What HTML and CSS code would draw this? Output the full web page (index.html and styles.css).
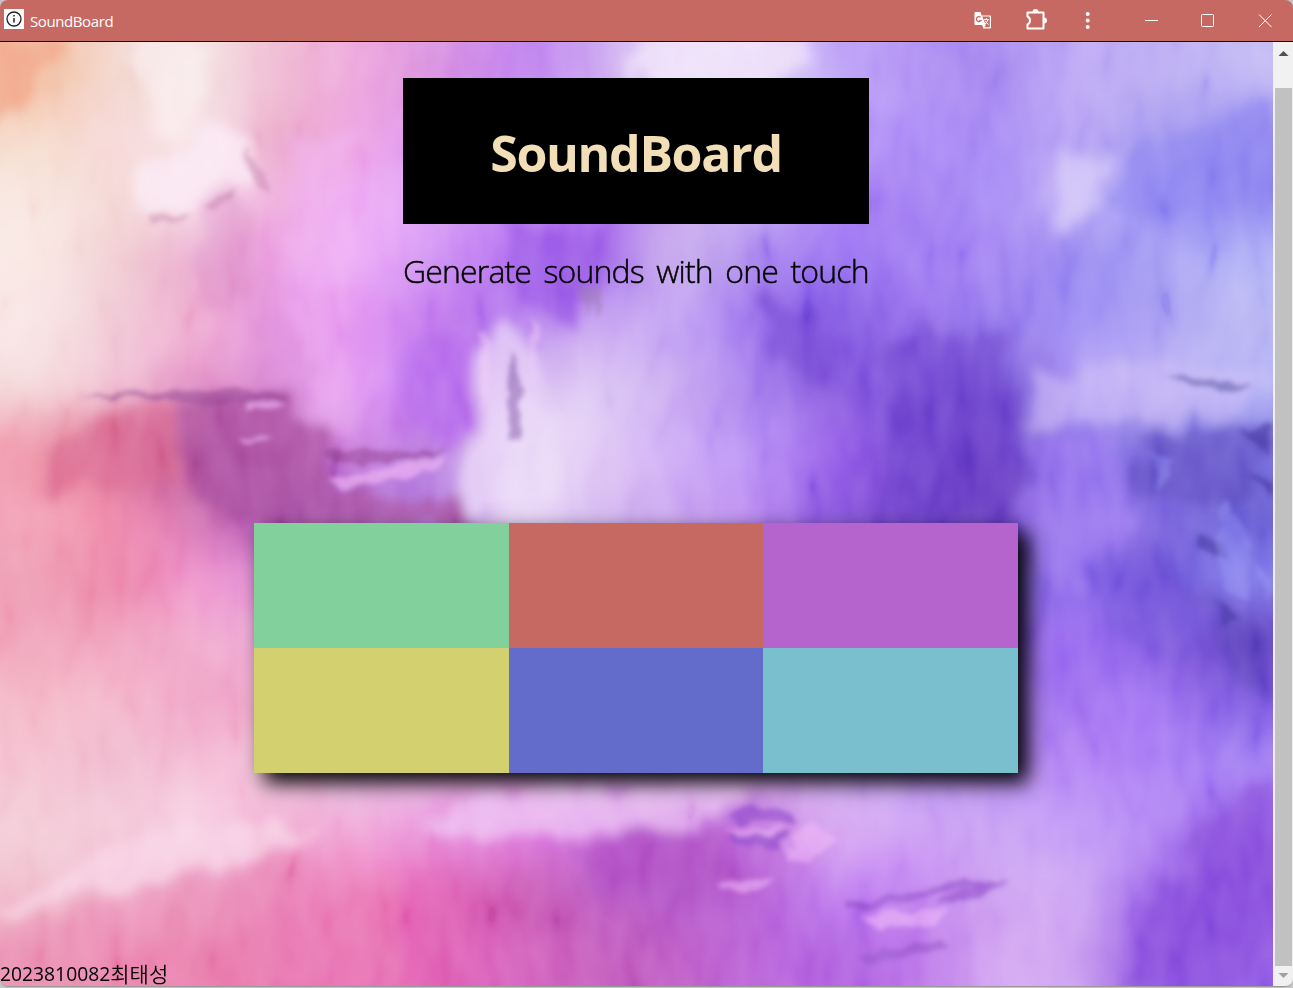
FILE: index.html
```html
<!DOCTYPE html>
<html lang="ko">
<head>
<meta charset="utf-8">
<title>SoundBoard</title>
<link rel="stylesheet" href="styles.css">
</head>
<body>
<div class="window">
  <header class="titlebar">
    <svg class="app-icon" viewBox="0 0 20 20"><path fill="#fff" d="M0 0h20v20H0z"/><circle cx="10" cy="10" r="7" fill="none" stroke="#222" stroke-width="1.3"/><path d="M10 9v4.500M10 6v1.500" stroke="#222" stroke-width="1.500"/></svg>
    <span class="app-name">SoundBoard</span>
    <svg class="tools" viewBox="0 0 343 41" fill="none" stroke="#fff">
      <path fill="#fff" stroke="none" d="M25.500 12h5l1.200 3.500H40q1 0 1 1V27.500q0 1-1 1H33.500L32 25h-6.500q-1 0-1-1V13q0-1 1-1z"/>
      <path fill="#c66962" stroke="none" d="M32.300 16.500H39.800v10.800H34.300l1.500-2z"/>
      <path stroke="#c66962" stroke-width="1.200" d="M30.600 17.200a2.500 2.500 0 1 0 .4 3.300h-2"/>
      <path stroke="#fff" stroke-width="1" d="M33.800 19.500h5M36.300 18v1.500M38 19.500q-.7 3.200-3.500 5M35 20.500q1 2.500 3.700 4"/>
      <path stroke-width="2" stroke-linejoin="round" d="M77.500 12.500h16V28.500h-16V24.500q2.500-1.200 2.500-4t-2.500-4z"/>
      <path fill="#fff" stroke="none" d="M82.500 12a3 3 0 0 1 6 0zM94 17.500a3 3 0 0 1 0 6z"/>
      <g fill="#fff" stroke="none"><circle cx="137.700" cy="14" r="2"/><circle cx="137.700" cy="20.500" r="2"/><circle cx="137.700" cy="27" r="2"/></g>
      <path d="M195 20.500h13"/><rect x="251.500" y="14.500" width="12" height="12" rx="1"/><path d="M309 14.500l12.500 12.500M321.500 14.500L309 27"/>
    </svg>
  </header>
  <div class="viewport">
    <main class="page">
      <div class="backdrop">
        <canvas id="wash" class="wash" width="1273" height="944"></canvas>
        <svg class="strokes" viewBox="0 42 1273 944">
          <defs>
            <filter id="soft" filterUnits="userSpaceOnUse" x="-40" y="0" width="1360" height="1040"><feTurbulence type="fractalNoise" baseFrequency=".03 .02" numOctaves="3" seed="3" result="n"/><feDisplacementMap in="SourceGraphic" in2="n" scale="45" xChannelSelector="R" yChannelSelector="G"/><feGaussianBlur stdDeviation="6"/></filter>
            <filter id="fine" filterUnits="userSpaceOnUse" x="-40" y="0" width="1360" height="1040"><feTurbulence type="fractalNoise" baseFrequency=".05" numOctaves="2" seed="5" result="n"/><feDisplacementMap in="SourceGraphic" in2="n" scale="14" xChannelSelector="R" yChannelSelector="G"/><feGaussianBlur stdDeviation="2.800"/></filter>
            <filter id="grain" x="0" y="0" width="100%" height="100%"><feTurbulence type="fractalNoise" baseFrequency=".04 .018" numOctaves="2" seed="8"/><feColorMatrix values="1.400 0 0 0 -.2  1.400 0 0 0 -.2  1.400 0 0 0 -.2  0 0 0 0 1"/></filter>
          </defs>
          <g filter="url(#soft)">
            <path fill="#f1a284" opacity=".75" d="M-10 40H70L48 75 25 108-10 120z"/>
            <path fill="#fae9f3" opacity=".85" d="M132 208L145 175 190 150 238 122 255 175 222 190 190 212z"/>
            <path fill="#fbeef1" opacity=".6" d="M130 40H215L190 145 170 145 155 85z"/>
            <path fill="#d98ac4" opacity=".4" d="M200 205L240 192 250 300 195 305z"/>
            <path fill="#f3b4f8" opacity=".4" d="M290 130H350L350 440 325 440 290 300z"/>
            <path fill="#9957e6" opacity=".7" d="M500 224H612L600 285 565 320 530 310z"/>
            <path fill="#efe0fa" opacity=".8" d="M640 40H810L785 78H630z"/>
            <path fill="#ead7f8" opacity=".7" d="M485 345L515 325 545 370 560 510H460L462 460 480 410z"/>
            <path fill="#b86aec" opacity=".8" d="M405 335H475L478 380 452 450 405 400z"/>
            <path fill="#7445d2" opacity=".65" d="M755 290L830 315 835 380 770 365z"/>
            <path fill="#6a3fca" opacity=".55" d="M880 350L940 330 1005 345 1018 400 1012 530H870L885 430z"/>
            <path fill="#9b78f0" opacity=".7" d="M1025 440L1120 435 1130 540 1060 600 1022 530z"/>
            <path fill="#d2c6f8" opacity=".8" d="M1053 150L1108 155 1100 205 1058 242z"/>
            <path fill="#8b82ef" opacity=".65" d="M1125 155L1190 135 1273 95V200L1190 210 1110 210z"/>
            <path fill="#d8668f" opacity=".65" d="M45 445L95 415 200 400V485L130 480 50 495z"/>
            <path fill="#a84e9e" opacity=".75" d="M185 400L290 398 325 445 330 485 385 500 460 500 470 530H260L192 500z"/>
            <path fill="#cbbcf7" opacity=".6" d="M1030 375L1100 370 1170 360 1273 375 1235 420 1130 418 1060 430 1030 425z"/>
            <path fill="#5541b8" opacity=".5" d="M1140 430L1200 428 1273 420V450L1230 510 1130 490zM1190 590L1250 625 1273 640V700L1230 675z"/>
            <path fill="#7656dc" opacity=".5" d="M1070 560L1140 540 1200 600 1190 660 1120 630z"/>
            <path fill="#f8d5e6" opacity=".8" d="M0 915L50 885 100 850 190 825 290 825 340 822 285 850 200 862 150 885 60 895 0 930z"/>
            <path fill="#e987b5" opacity=".4" d="M0 935L110 895 210 868 300 855 400 880V990H0z"/>
            <path fill="#f0c9f5" opacity=".7" d="M500 785H770L680 822 580 828 430 835 430 815z"/>
            <path fill="#b052c4" opacity=".7" d="M580 850L640 825 720 828 745 880 700 900 590 900z"/>
            <path fill="#874cdb" opacity=".75" d="M1273 780L1200 830 1185 870 1150 910 1130 985H1273z"/>
          </g>
          <g filter="url(#fine)">
            <path fill="#8d3d8b" opacity=".55" d="M75 396Q150 386 288 392L285 403 240 402 192 405 145 398zM325 452L450 449 425 458 360 463 325 460z"/>
            <path fill="#edaef3" opacity=".7" d="M244 401L285 404 275 409 245 408zM240 437L275 436 265 441 240 441zM325 480L360 472 440 456 448 463 410 477 345 489z"/>
            <path fill="#9b74bc" opacity=".75" d="M509 350L520 370 520 440 510 444 507 400zM580 290L588 318 592 300 598 318 604 285z"/>
            <path fill="#b56a9c" opacity=".4" d="M245 150L260 165 270 195 255 185zM205 203L235 188 230 200 210 208zM150 214L190 217 185 222 150 220z"/>
            <path fill="#7069b5" opacity=".75" d="M1165 375L1205 380 1250 385 1240 391 1200 386z"/>
            <path fill="#3e329e" opacity=".65" d="M1240 430L1273 425V458L1255 443zM1250 475L1273 480V500zM1195 530L1225 545 1230 560 1200 550zM1215 600L1240 620 1225 625z"/>
            <path fill="#9290f4" opacity=".5" d="M1225 500L1245 530 1250 600 1225 590 1215 540zM1150 450L1175 460 1160 490zM1255 560L1273 575 1265 600z"/>
            <path fill="#9855d0" opacity=".8" d="M845 905L900 895 960 880 1008 882 980 898 930 903 970 887 900 903 850 912zM855 955L940 940 950 947 870 965z"/>
            <path fill="#8f48cb" opacity=".65" d="M725 818L750 806 790 810 795 823 760 820 740 826zM730 835L785 830 795 850 735 845z"/>
            <path fill="#efb4f8" opacity=".6" d="M722 830L785 827 780 832 740 836zM720 884L775 878 758 889 722 890zM780 840L815 825 840 840 820 856 790 865zM860 915L920 910 950 908 935 925 880 930z"/>
            <path fill="#f1c5fa" opacity=".5" d="M480 330Q495 330 490 390L482 415zM530 315L540 340 530 370z"/>
          </g>
          <rect class="grain" y="42" width="1273" height="944" filter="url(#grain)"/>
        </svg>
      </div>
      <section class="intro">
        <h1>SoundBoard</h1>
        <p>Generate sounds with one touch</p>
      </section>
      <section class="board">
        <div class="pad green"></div><div class="pad red"></div><div class="pad violet"></div>
        <div class="pad yellow"></div><div class="pad blue"></div><div class="pad cyan"></div>
      </section>
      <footer><span class="num">2023810082</span><span class="name">최태성</span></footer>
    </main>
    <aside class="scrollbar">
      <svg viewBox="0 0 20 46"><path d="M5.500 14h10L10.500 9z" fill="#505050"/></svg>
      <div class="thumb"></div>
      <svg class="down" viewBox="0 0 20 20"><path d="M5.500 7h10L10.500 12z" fill="#a0a0a0"/></svg>
    </aside>
  </div>
</div>
<script src="wash.js"></script>
</body>
</html>
```
FILE: styles.css
```css
* { box-sizing: border-box; }
body { margin: 0; height: 988px; overflow: hidden; background: #c4c4c4; font-family: "Open Sans", "Noto Sans CJK KR", sans-serif; }
.window { height: 987px; display: flex; flex-direction: column; border-radius: 8px; overflow: hidden; border-bottom: 1px solid #999; }
.titlebar { height: 42px; flex: none; display: flex; align-items: flex-start; background: #c66962; border-bottom: 1px solid #000; color: #fff; }
.app-icon { width: 20px; height: 20px; margin: 9px 6px 0 4px; }
.app-name { font-size: 15px; line-height: 20px; margin-top: 11px; letter-spacing: -.4px; }
.tools { width: 343px; height: 41px; margin-left: auto; }
.viewport { flex: 1; display: flex; min-height: 0; }
.page { position: relative; width: 1273px; display: flex; flex-direction: column; align-items: center; padding: 36px 1px 0 0; }
.backdrop { position: absolute; inset: 0; overflow: hidden; }
.wash, .strokes { position: absolute; top: 0; left: 0; width: 1273px; height: 944px; display: block; }
.grain { mix-blend-mode: soft-light; opacity: .3; }
.intro, .board, footer { position: relative; }
.intro { width: 466px; text-align: center; }
h1 { margin: 0; height: 146px; line-height: 150px; background: #000; color: #f2dfb8; font-size: 50px; font-weight: 700; letter-spacing: -1.350px; white-space: nowrap; }
.intro p { margin: 25px 0 0; height: 48px; line-height: 44px; font-size: 32px; font-weight: 300; letter-spacing: -.850px; word-spacing: 5px; color: #000; -webkit-text-stroke: .45px #000; text-align: left; white-space: nowrap; }
.board { width: 764px; height: 250px; margin-top: 226px; display: grid; grid-template-columns: 255px 254px 255px; grid-template-rows: 125px 125px; box-shadow: 10px 10px 20px #000; }
.green { background: #82d19c; }
.red { background: #c66962; }
.violet { background: #b464cc; }
.yellow { background: #d3d070; }
.blue { background: #636bcb; }
.cyan { background: #79bfce; }
footer { margin-top: auto; align-self: flex-start; height: 26px; line-height: 28px; display: flex; font-size: 19.300px; color: #000; }
.name { font-family: "Noto Sans CJK KR", sans-serif; font-weight: 350; font-size: 21px; line-height: 26px; }
.scrollbar { width: 20px; background: #f1f1f1; display: flex; flex-direction: column; }
.scrollbar svg { width: 20px; height: 46px; flex: none; }
.scrollbar .down { height: 20px; }
.thumb { flex: 1; margin: 0 1px 0 2px; background: #c1c1c1; }
```
FILE: wash.js
```js
// Watercolour wash: coarse colour samples, smoothly enlarged.
const rows = [
  "f3bea0 f3d8d0 f3e3e3 efb8d0 eda6dc d890e0 c080ee c8a0f0 eae0f8 e8dcf8 bca0f6 b090f4 a384ee bca8f6 b8a8f2 c0b6f4",
  "f5d8c8 f6d6d6 f8e4e8 ecaccb ec9fe0 d890f0 c080f0 d0b0f0 e0d0f8 d0c0f8 b898f6 ac8cf6 a688f4 b8a4f4 a89cf0 9084f0",
  "f8e6e0 f4d6d4 f8dcea eea8da eeaaf4 dca0f6 c080f0 b070ee c8a8f0 c8b0f4 a880f4 a07cf2 a488f4 c0b0f6 948af4 8c84f0",
  "f9e6e2 f0ccd2 eaa6cc e898e0 eca8f6 cc8cf2 b06cf0 9c60ea c8acec a884ee 946cf0 a07cf2 a484f2 9484f0 a49cf2 b0b0f6",
  "f8e4e4 f0c6d4 f0aed2 e08cdc e090f0 be74ec b47cec c8a4f0 c0a0f4 9a70ec 8058e0 9068ea 9074ea a090f4 a89cf2 b8b4f2",
  "f4d6d8 f0bcd0 e08cc4 d888d4 e49cf4 b86aec d8b8f0 dcc8f4 c8a8f0 a47cec 8454dc 7c54dc 6c48d0 a890f2 b8aaf2 b0aef4",
  "ee94a8 d86890 b4589c b860b4 cc80e0 b87ce0 eedcf8 e0c8f4 ccaaf6 b68cf4 9860ea 7444d0 6238c0 8c74ea 7868dc 7870e0",
  "f2a0b4 ee84a8 d070b0 a858b8 b070d0 b07ce0 ecdaf8 d4b8f0 c8a0f0 b888f0 8450dc 7440cc 6034b4 9070ee 7c64e0 6c60d4",
  "ee9cb4 ec84a8 ee90cc d880d0 c890e0 d0a0e8 e0c0f0 d0b0f0 c0a0f0 b080f0 9060e0 8050d8 7050d0 9070ee 6c50d4 7c74e8",
  "f0a0b8 f0a0bc f0a8cc eeaad8 e8a8e0 e0a8e8 e0b8f0 d8b0f0 c8a0f0 b890f0 a880f0 9868e8 8c60e8 9868f0 8058e0 6848c8",
  "f4b8c8 f4b8cc efa0c4 f0acd0 eab0d8 e8b4e0 e8b8ec e0b8f0 d8b0f0 c8a0f0 b890f0 b084f0 a070ec a070f0 a070f2 7c58e0",
  "f4c0d0 f0bcd0 f4bcd4 f4c0dc e8b8e0 ecb8e4 ecbcec e8c0f0 e0c0f4 d8b0f0 cca8f4 c098f4 b488f4 b484f4 aa7cf4 a480f4",
  "f4ccd8 f4c8d8 f8d0e4 f0a8d0 f0a8d8 e890dc e07ce0 c868dc b454d0 c070dc d8a8f0 cca0f4 c8a0f4 c098f6 b488f4 9058e4",
  "f0bccc f0b0c8 ec9cc0 ea80b8 ee74bc e060b4 cc5cb4 bc58c0 b054c8 b45cd4 c080f0 c080f0 cca0f0 d0a8f4 9860e8 8850dc",
  "ec94b0 ee88b0 ea78a8 e86cac e866b4 e060b4 d460bc c45cbc bc58c4 b860d8 b060e0 b870e8 d0a0f0 cca0f0 8c50e0 9058e8"
].map(row => row.split(" "));
const samples = document.createElement("canvas");
samples.width = 16;
samples.height = 15;
const paint = samples.getContext("2d");
rows.forEach((row, y) => row.forEach((color, x) => {
  paint.fillStyle = "#" + color;
  paint.fillRect(x, y, 1, 1);
}));
const context = document.getElementById("wash").getContext("2d");
context.imageSmoothingQuality = "high";
context.drawImage(samples, 0, 0, 1273, 944);
```
